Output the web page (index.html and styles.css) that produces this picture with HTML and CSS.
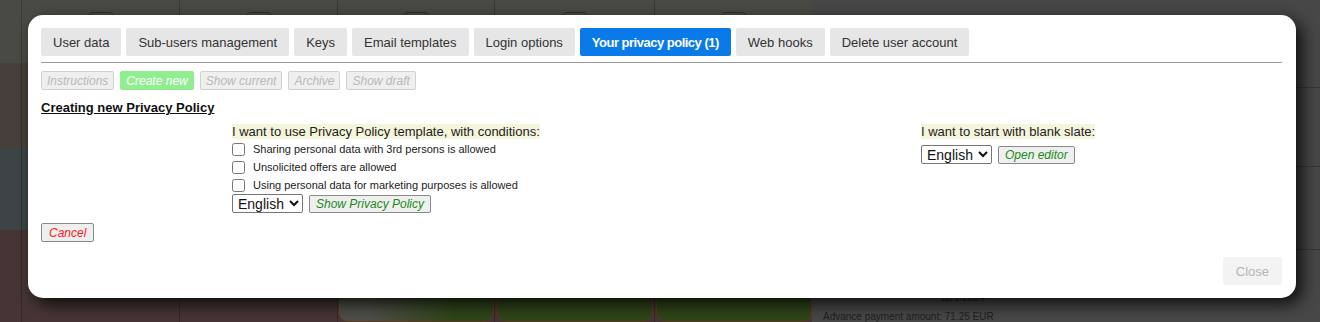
FILE: index.html
```html
<!DOCTYPE html>
<html lang="en">
<head>
    <meta charset="UTF-8" />
    <title>User settings</title>
    <link rel="stylesheet" href="styles.css">
</head>
<body>
    <div class="page">
        <div class="board">
            <div class="band band-a">
                <div class="cell"></div>
                <div class="cell"><span class="knob"></span></div>
                <div class="cell"><span class="knob"></span></div>
                <div class="cell"><span class="knob"></span></div>
                <div class="cell"><span class="knob"></span></div>
                <div class="cell"><span class="knob"></span></div>
            </div>
            <div class="band band-b">
                <div class="cell"></div><div class="cell"></div><div class="cell"></div>
                <div class="cell"></div><div class="cell"></div><div class="cell"></div>
            </div>
            <div class="band band-c">
                <div class="cell"></div><div class="cell"></div><div class="cell"></div>
                <div class="cell"></div><div class="cell"></div><div class="cell"></div>
            </div>
            <div class="band band-d">
                <div class="cell"></div><div class="cell"></div><div class="cell"></div>
                <div class="cell"><span class="slot slot-first"></span></div>
                <div class="cell"><span class="slot"></span></div>
                <div class="cell"><span class="slot"></span></div>
            </div>
        </div>
        <div class="side">
            <div class="side-row row-1"></div>
            <div class="side-row row-2"></div>
            <div class="side-row row-3"></div>
            <div class="side-row row-4">
                <div class="due">12/1/2024</div>
                <div class="advance">Advance payment amount: 71.25 EUR</div>
            </div>
        </div>
    </div>

    <div class="modal">
        <div class="tabs">
            <a class="tab">User data</a>
            <a class="tab">Sub-users management</a>
            <a class="tab">Keys</a>
            <a class="tab">Email templates</a>
            <a class="tab">Login options</a>
            <a class="tab active">Your privacy policy (1)</a>
            <a class="tab">Web hooks</a>
            <a class="tab">Delete user account</a>
        </div>

        <div class="actions">
            <button class="act">Instructions</button>
            <button class="act current">Create new</button>
            <button class="act">Show current</button>
            <button class="act">Archive</button>
            <button class="act">Show draft</button>
        </div>

        <h3 class="heading">Creating new Privacy Policy</h3>

        <div class="choice">
            <div class="spacer"></div>
            <div class="template">
                <div class="note"><span>I want to use Privacy Policy template, with conditions:</span></div>
                <label class="opt"><input type="checkbox">Sharing personal data with 3rd persons is allowed</label>
                <label class="opt"><input type="checkbox">Unsolicited offers are allowed</label>
                <label class="opt"><input type="checkbox">Using personal data for marketing purposes is allowed</label>
                <div class="pick">
                    <select><option>English</option></select>
                    <button class="go">Show Privacy Policy</button>
                </div>
            </div>
            <div class="blank">
                <div class="note"><span>I want to start with blank slate:</span></div>
                <div class="pick pick-blank">
                    <select><option>English</option></select>
                    <button class="go">Open editor</button>
                </div>
            </div>
        </div>

        <button class="cancel">Cancel</button>

        <button class="close">Close</button>
    </div>
</body>
</html>
```

FILE: styles.css
```css
body {
    margin: 0;
    padding: 0;
    background: #474747;
    font-family: "Liberation Sans", Arial, sans-serif;
    color: #222;
    overflow: hidden;
}

/* dimmed page behind the dialog */
.page {
    display: flex;
    height: 322px;
}

.board {
    width: 812px;
    display: flex;
    flex-direction: column;
}

.band {
    display: grid;
    grid-template-columns: 21px 158px 158px 157px 160px 158px;
}

.band-a { height: 65px; background: #4a4a44; }
.band-b { height: 87px; background: #47403a; }
.band-c { height: 85px; background: #3c4446; }
.band-d { flex: 1; background: #463534; }

.cell {
    border-left: 1px solid rgba(0, 0, 0, 0.22);
    display: flex;
    justify-content: center;
}

.cell:first-child {
    border-left: none;
}

.knob {
    width: 24px;
    height: 12px;
    margin-top: 12px;
    border: 1px solid #2e2e2a;
    border-radius: 5px;
}

.slot {
    width: 154px;
    height: 40px;
    margin-top: 50px;
    background: #2f4419;
    border: 1px solid #5c3a22;
    border-radius: 0 0 10px 10px;
}

.slot-first {
    background: linear-gradient(100deg, #4f4f49 20%, #2f4419 75%);
}

.side {
    flex: 1;
    display: flex;
    flex-direction: column;
}

.side-row {
    border-bottom: 1px solid #363636;
}

.row-1 { height: 87px; }
.row-2 { height: 79px; }
.row-3 { height: 82px; }
.row-4 {
    flex: 1;
    border-bottom: none;
    font-size: 10px;
    color: #1e1e1e;
}

.due {
    margin: 42px 0 0 128px;
}

.advance {
    margin: 8px 0 0 11px;
}

/* dialog */
.modal {
    position: absolute;
    left: 28px;
    top: 15px;
    width: 1268px;
    height: 283px;
    box-sizing: border-box;
    padding: 13px 14px 13px 13px;
    background: #FFFFFF;
    border-radius: 15px;
    box-shadow: 6px 6px 16px rgba(0, 0, 0, 0.8);
    display: flex;
    flex-direction: column;
}

.tabs {
    display: flex;
    gap: 5px;
    padding-bottom: 6px;
    border-bottom: 1px solid #9a9a9a;
}

.tab {
    height: 28px;
    padding: 0 12px;
    display: flex;
    align-items: center;
    background: #e6e6e6;
    color: #333;
    font-size: 13px;
    border-radius: 2px;
    cursor: pointer;
}

.tab.active {
    background: #0a7ae8;
    color: #FFFFFF;
    font-weight: bold;
    letter-spacing: -0.5px;
}

.actions {
    display: flex;
    gap: 6px;
    margin-top: 8px;
}

.act {
    height: 19px;
    padding: 0 5px;
    font-family: inherit;
    font-size: 12px;
    font-style: italic;
    color: #b8b8b8;
    background: #efefef;
    border: 1px solid #d2d2d2;
    border-radius: 2px;
}

.act.current {
    background: #90ee90;
    border-color: #90ee90;
    color: #FFFFFF;
}

.heading {
    margin: 10px 0 0;
    font-size: 13px;
    line-height: 15px;
    font-weight: bold;
    text-decoration: underline;
    color: #111;
}

.choice {
    display: grid;
    grid-template-columns: 191px 689px 1fr;
    margin-top: 9px;
}

.note {
    font-size: 13px;
    line-height: 16px;
    color: #222;
}

.note span {
    background: #f5f5dc;
}

.opt {
    display: flex;
    align-items: center;
    height: 18px;
    font-size: 11px;
    color: #222;
}

.opt input {
    width: 13px;
    height: 13px;
    margin: 0 8px 0 0;
}

.pick {
    display: flex;
    align-items: center;
    gap: 6px;
}

.pick-blank {
    margin-top: 5px;
}

select {
    width: 71px;
    height: 19px;
    font-family: inherit;
    font-size: 14px;
    color: #111;
    background: #FFFFFF;
    border: 1px solid #767676;
    border-radius: 2px;
    padding: 0 0 0 1px;
}

.go {
    height: 18px;
    padding: 0 6px;
    font-family: inherit;
    font-size: 12px;
    font-style: italic;
    color: #1a8a1a;
    background: #efefef;
    border: 1px solid #8a8a8a;
    border-radius: 2px;
}

.cancel {
    align-self: flex-start;
    height: 19px;
    margin-top: 10px;
    padding: 0 7px;
    font-family: inherit;
    font-size: 12px;
    font-style: italic;
    color: #ff1a1a;
    background: #efefef;
    border: 1px solid #8a8a8a;
    border-radius: 2px;
}

.close {
    align-self: flex-end;
    margin-top: auto;
    height: 28px;
    padding: 0 13px;
    font-family: inherit;
    font-size: 13px;
    color: #b5b5b5;
    background: #f3f3f3;
    border: none;
    border-radius: 2px;
}
```
